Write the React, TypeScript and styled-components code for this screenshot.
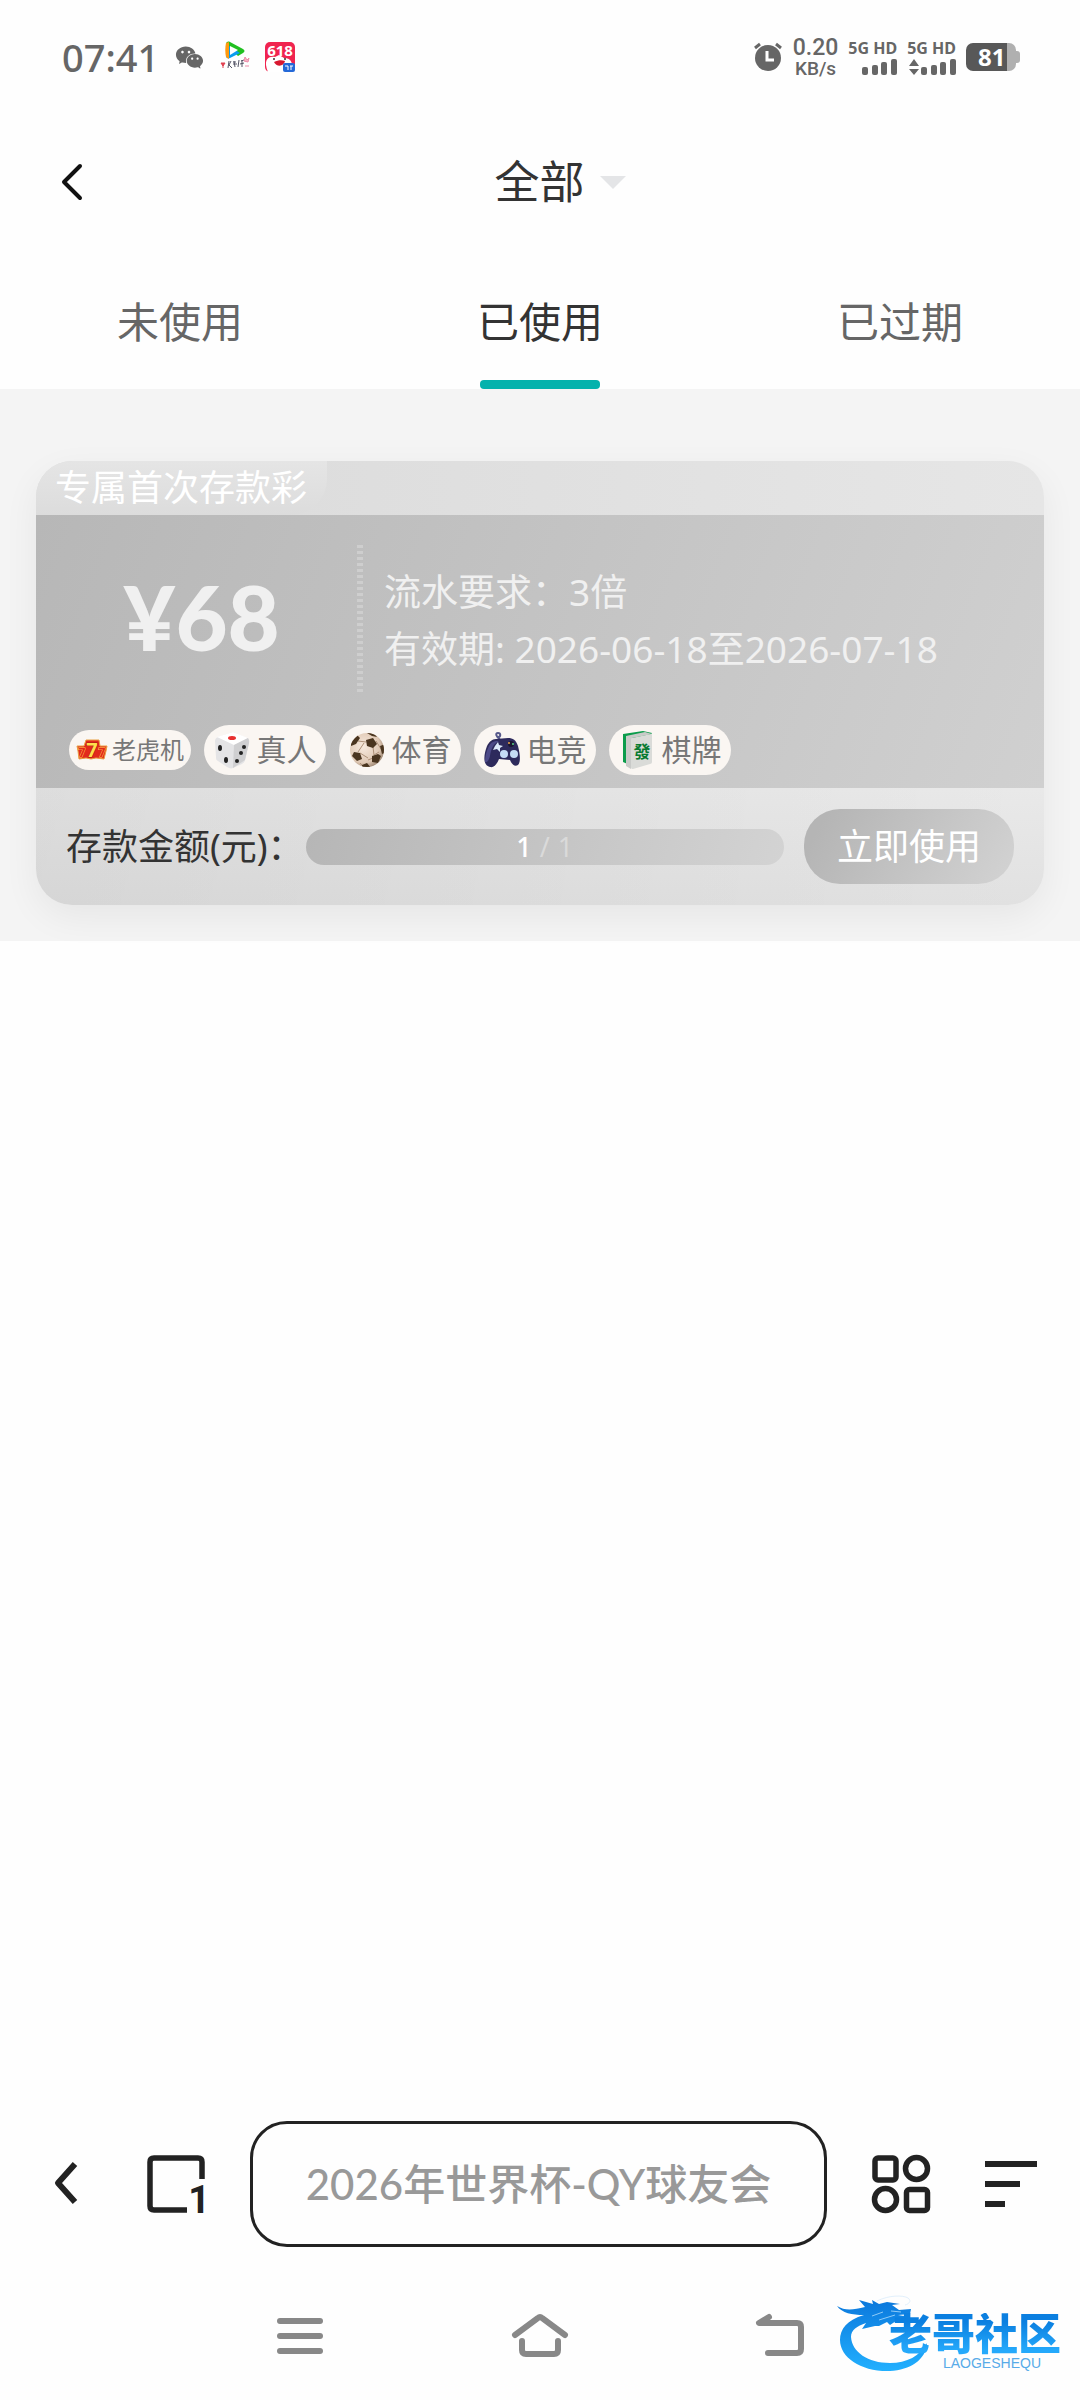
import React from 'react'
import { AiFillWechat } from 'react-icons/ai'
import styled, { createGlobalStyle } from 'styled-components'

const GlobalStyle = createGlobalStyle`
  * {
    box-sizing: border-box;
  }

  body {
    margin: 0;
    background: #fefefe;
    color: #333;
    font-family: 'Noto Sans', 'Noto Sans CJK SC', sans-serif;
  }

  button,
  input,
  select {
    margin: 0;
    padding: 0;
    border: 0;
    background: none;
    color: inherit;
    font: inherit;
  }

  svg {
    display: block;
    flex: none;
    overflow: visible;
  }
`

const Page = styled.div`
  position: relative;
  display: flex;
  flex-direction: column;
  min-height: 100vh;
`

/* status bar */

const StatusBar = styled.div`
  display: flex;
  align-items: center;
  justify-content: space-between;
  height: 114px;
  padding: 0 60px 0 62px;
  color: #666;
`

const StatusGroup = styled.div<{ $gap: number }>`
  display: flex;
  align-items: center;
  gap: ${({ $gap }) => $gap}px;
`

const Clock = styled.time`
  font-size: 38px;
  font-weight: 500;
  line-height: 48px;
`

const Speed = styled.div`
  display: flex;
  flex-direction: column;
  align-items: center;
  font-family: Roboto, sans-serif;
  font-size: 19px;
  font-weight: 500;
  line-height: 18px;

  strong {
    font-size: 23px;
    font-weight: 500;
    line-height: 24px;
  }
`

const Network = styled.div`
  display: flex;
  flex-direction: column;
  align-items: flex-end;
  gap: 3px;
  font-size: 16px;
  font-weight: 700;
  line-height: 16px;
`

const Battery = styled.div`
  display: flex;
  align-items: center;

  &::after {
    content: '';
    width: 4px;
    height: 12px;
    border-radius: 0 3px 3px 0;
    background: #b0b0b0;
  }
`

const BatteryBody = styled.div`
  width: 50px;
  height: 28px;
  padding-left: 12px;
  border-radius: 7px;
  background: linear-gradient(to right, #585858 81%, #b0b0b0 81%);
  color: #fff;
  font-size: 24px;
  font-weight: 700;
  line-height: 28px;
`

/* header */

const Header = styled.header`
  display: grid;
  grid-template-columns: 1fr auto 1fr;
  align-items: center;
  height: 136px;
  padding: 0 60px;
`

const IconButton = styled.button`
  display: flex;
  align-items: center;
  justify-content: center;
  min-width: 58px;
  height: 58px;
  cursor: pointer;
`

const HeaderBack = styled(IconButton)`
  justify-content: flex-start;
`

const FilterSelect = styled.select`
  appearance: none;
  height: 66px;
  color: #333;
  font-size: 45px;
  line-height: 66px;
`

const Caret = styled.svg`
  margin-left: 14px;
`

const TabList = styled.div`
  display: grid;
  grid-template-columns: repeat(3, 1fr);
  height: 139px;
`

const Tab = styled.button<{ $active: boolean }>`
  display: flex;
  flex-direction: column;
  align-items: center;
  justify-content: flex-end;
  gap: 28px;
  color: ${({ $active }) => ($active ? '#333' : '#666')};
  font-size: 42px;
  line-height: 60px;
  cursor: pointer;

  &::after {
    content: '';
    width: 120px;
    height: 9px;
    border-radius: 4px;
    background: ${({ $active }) => ($active ? '#04b2ac' : 'transparent')};
  }
`

/* coupon */

const CouponList = styled.main`
  padding: 72px 36px 36px;
  background: #f4f4f4;
`

const Card = styled.article`
  overflow: hidden;
  border-radius: 36px;
  box-shadow: 0 12px 36px rgba(0, 0, 0, 0.06);
  font-size: 36px;
  line-height: 54px;
`

const CardTop = styled.div`
  display: flex;
  height: 54px;
  background: linear-gradient(to right, #dadada, #e6e6e6);
`

const CardTitle = styled.h2`
  margin: 0;
  padding: 0 20px 0 19px;
  border-bottom-right-radius: 36px;
  background: linear-gradient(to bottom, #e5e5e5, #dcdcdc);
  color: #fff;
  font-size: 36px;
  font-weight: 400;
  line-height: 54px;
`

const CardBody = styled.div`
  padding: 30px 30px 13px;
  background: linear-gradient(110deg, #b7b7b7, #d0d0d0);
  color: #f0f0f0;
`

const CardInfo = styled.div`
  display: flex;
  height: 150px;
`

const Amount = styled.div`
  width: 291px;
  padding-right: 20px;
  font-family: Lato, 'Noto Sans', sans-serif;
  font-size: 90px;
  font-weight: 900;
  line-height: 142px;
  text-align: center;
`

const Divider = styled.div`
  width: 6px;
  background: repeating-linear-gradient(
    to bottom,
    #cecece 0 3px,
    transparent 3px 6px
  );
`

const Terms = styled.div`
  display: flex;
  flex-direction: column;
  justify-content: center;
  padding-left: 21px;
  font-size: 37px;
  line-height: 57px;

  p {
    margin: 0;
  }
`

const TagList = styled.ul`
  display: flex;
  align-items: center;
  gap: 13px;
  margin: 30px 0 0;
  padding: 0 3px;
  list-style: none;
`

const Tag = styled.li<{ $small?: boolean }>`
  display: flex;
  align-items: center;
  justify-content: center;
  gap: ${({ $small }) => ($small ? 4 : 7)}px;
  width: 122px;
  height: ${({ $small }) => ($small ? 40 : 50)}px;
  border-radius: 25px;
  background: #faf6f2;
  color: #777;
  font-size: ${({ $small }) => ($small ? 24 : 30)}px;
  line-height: 40px;
  white-space: nowrap;
`

const CardFooter = styled.div`
  display: flex;
  align-items: center;
  height: 117px;
  padding: 0 30px;
  background: linear-gradient(to right, rgba(0, 0, 0, 0.05), transparent),
    linear-gradient(to bottom, #e9e9e9, #e1e1e1);
`

const Progress = styled.div`
  display: flex;
  flex: 1;
  align-items: center;
  justify-content: center;
  gap: 8px;
  height: 36px;
  margin: 0 20px 0 2px;
  border-radius: 18px;
  background: linear-gradient(105deg, #b6b6b6, #d3d3d3);
  color: #dadada;
  font-size: 27px;
  line-height: 36px;

  b {
    color: #fff;
    font-weight: 500;
  }
`

const UseButton = styled.button`
  width: 210px;
  height: 75px;
  border-radius: 36px;
  background: linear-gradient(120deg, #b5b5b5 10%, #d3d3d3);
  color: #fff;
  font-size: 36px;
  line-height: 54px;
`

/* browser toolbar and system keys */

const Toolbar = styled.footer`
  display: flex;
  align-items: center;
  gap: 45px;
  margin-top: auto;
  padding: 12px 40px 24px 37px;
  color: #222;
`

const ToolGroup = styled.div`
  display: flex;
  gap: 52px;
`

const SearchBox = styled.input`
  flex: 1;
  min-width: 0;
  height: 126px;
  border: 3px solid #222;
  border-radius: 37px;
  font-family: Lato, 'Noto Sans CJK SC', sans-serif;
  font-size: 42px;
  font-weight: 500;
  text-align: center;

  &::placeholder {
    color: #999;
    opacity: 1;
  }
`

const SystemNav = styled.nav`
  display: grid;
  grid-template-columns: repeat(3, 240px);
  align-items: center;
  justify-content: center;
  height: 129px;
  color: #888;
`

const SystemKey = styled(IconButton)`
  justify-self: center;
`

const Watermark = styled.div`
  position: absolute;
  right: 19px;
  bottom: 27px;
  display: flex;
  flex-direction: column;
  align-items: flex-end;
  width: 224px;
  height: 80px;
  padding-top: 20px;
  font-family: 'Liberation Sans', 'Noto Sans CJK SC', sans-serif;
  font-weight: 900;

  svg {
    position: absolute;
    top: 0;
    left: 0;
  }
`

const WatermarkName = styled.span`
  position: relative;
  background: linear-gradient(to bottom, #0b7fe0 20%, #25a9fb 85%);
  background-clip: text;
  color: transparent;
  font-size: 43px;
  line-height: 44px;
`

const WatermarkLatin = styled.span`
  position: relative;
  padding-right: 20px;
  color: #58abe8;
  font-size: 14px;
  font-weight: 400;
  line-height: 12px;
`

const VideoAppIcon = () => (
  <svg width='30' height='32' viewBox='0 0 30 32'>
    <path d='M6 3c0-2 2-3 4-2l13 7c2 1 2 3 0 4l-5 3z' fill='#20c020' />
    <path d='M6 3v12c0 2 2 3 4 2l10-5z' fill='#0a9cf0' />
    <path d='M6 2c-1 5-1 9 0 14l3 2V1z' fill='#ff9a10' />
    <path d='M10 5v9l8-5z' fill='#fff' />
    <path d='M1 22l2 3 2-3zM3 24v3' stroke='#e04050' strokeWidth='1' fill='#e04050' />
    <path
      d='M9 20l-1 7m3-7-2 4 3 3m1-6h3m-2-1 1 6m-2-3h4m2-4-1 7m3-6 3-1m-2 0v7m-2-3 4-1'
      stroke='#556'
      strokeWidth='1'
      fill='none'
    />
    <path d='M25 16l2 3 2-2-1 4-4-1zM25 25h4' stroke='#ee8aa8' fill='#f6b5c6' />
  </svg>
)

const SaleAppIcon = () => (
  <svg width='30' height='30' viewBox='0 0 30 30'>
    <rect width='30' height='30' rx='5' fill='#f0244f' />
    <path d='M3 30c-5-12 0-16 7-15l4-2 5 3c8 0 9 6 8 14z' fill='#fff' />
    <text x='15' y='14' fill='#fff' fontSize='15' fontWeight='700' textAnchor='middle'>
      618
    </text>
    <circle cx='9' cy='17' r='1' fill='#333' />
    <circle cx='20' cy='17' r='1' fill='#333' />
    <path d='M9 20c4-2 8-2 11-1-1 6-9 6-11 1z' fill='#d81830' />
    <rect x='18' y='21' width='12' height='9' rx='2' fill='#2469d8' />
    <path d='M20 24h3v4m2-4h3m-2 0v4' stroke='#fff' strokeWidth='1' fill='none' />
  </svg>
)

const AlarmIcon = () => (
  <svg width='30' height='30' viewBox='0 0 30 30'>
    <circle cx='15' cy='16' r='13' fill='currentColor' />
    <path d='M2 6l5-4M28 6l-5-4' stroke='currentColor' strokeWidth='3' />
    <path d='M14 9v9h7' stroke='#fff' strokeWidth='3' fill='none' />
  </svg>
)

const SignalIcon = ({ data }: { data?: boolean }) => (
  <svg width='48' height='16' viewBox='0 0 48 16' fill='currentColor'>
    {data && <path d='M1 7l5-7 5 7zM1 10l5 6 5-6z' />}
    <rect x='13' y='8' width='6' height='8' rx='2' />
    <rect x='23' y='6' width='6' height='10' rx='2' />
    <rect x='32' y='3' width='6' height='13' rx='2' />
    <rect x='42' width='6' height='16' rx='2' />
  </svg>
)

const SlotIcon = () => (
  <svg width='32' height='22' viewBox='0 0 32 22'>
    <path
      d='M1 7h7l2-6h13l1 6h7l-1 5-2 8-8-1-5 1-5-1-7 1-1-8z'
      fill='#e22a1c'
      stroke='#e9a043'
      strokeWidth='1'
    />
    <g
      fill='#e4271b'
      stroke='#ffc94a'
      strokeWidth='1'
      paintOrder='stroke'
      fontWeight='700'
      textAnchor='middle'
    >
      <text x='6' y='18' fontSize='12'>7</text>
      <text x='26' y='18' fontSize='12'>7</text>
      <text x='16' y='18' fill='#ffdf4c' stroke='#a8180f' fontSize='20'>7</text>
    </g>
  </svg>
)

const DiceIcon = () => (
  <svg width='36' height='36' viewBox='0 0 36 36'>
    <path d='M4 5l15-5 14 6c2 1 3 3 2 5l-4 17c0 2-2 3-3 4l-9 4c-2 1-4 0-6-1L4 29c-2-1-2-2-2-4L1 9c0-2 1-3 3-4z' fill='#e4e4e6' />
    <path d='M3 5l16-5 15 6-14 7z' fill='#fff' />
    <path d='M20 13l14-7c1 1 1 3 1 5l-4 17-12 8z' fill='#cfcfd1' />
    <ellipse cx='18' cy='6' rx='4' ry='2' fill='#e83030' />
    <g fill='#222'>
      <ellipse cx='6' cy='16' rx='2' ry='3' />
      <ellipse cx='12' cy='28' rx='2' ry='3' />
      <circle cx='30' cy='15' r='2' />
      <circle cx='27' cy='21' r='2' />
      <circle cx='23' cy='29' r='2' />
    </g>
  </svg>
)

const BallIcon = () => (
  <svg width='36' height='36' viewBox='0 0 36 36'>
    <defs>
      <clipPath id='ball'>
        <circle cx='18' cy='18' r='17' />
      </clipPath>
      <radialGradient id='leather' cx='40%' cy='40%' r='65%'>
        <stop offset='0' stopColor='#f8eade' />
        <stop offset='0.7' stopColor='#dfc8b4' />
        <stop offset='1' stopColor='#8e7763' />
      </radialGradient>
    </defs>
    <g clipPath='url(#ball)'>
      <rect width='36' height='36' fill='url(#leather)' />
      <path
        d='M9 9l8 1m7 5 1 8m-14-2 8 5m-4-15-6 9m15 6-5 2m-4 7-4-4M27 9l5 8m-7 6 5-3'
        stroke='#ad9078'
        strokeWidth='1'
      />
      <g fill='#4a351f'>
        <path d='M17 8l7-2 4 6-4 4-6-2z' />
        <path d='M2 9l6-6 3 3-4 6-5 2z' />
        <path d='M5 20l6 1 2 6-5 2-5-5z' />
        <path d='M23 24l6-2 3 2-3 7-6-1z' />
        <path d='M31 14l5-2v9l-3 1z' />
        <path d='M13 33l5-2 4 5h-9zM18 1h7l3 4-5-1z' />
      </g>
    </g>
  </svg>
)

const GamepadIcon = () => (
  <svg width='36' height='36' viewBox='0 0 36 36'>
    <path d='M16 7c-4-2-5-6-2-6s3 4 0 4' stroke='#56598b' strokeWidth='2' fill='none' />
    <path
      d='M3 14c2-4 5-7 9-7l12-1c5 0 8 2 10 8 2 8 3 16 0 19-3 2-6 0-8-5l-11-1c-2 5-5 9-9 8-8-2-6-13-3-21z'
      fill='#2d2a5c'
    />
    <path d='M5 14c3-5 6-5 10-5-6 3-8 8-9 15-1 4-3 7-5 6 0-5 1-10 4-16z' fill='#4c4a88' />
    <path d='M14 10l1 3 4 1-3 2v4l-3-3-4 1 2-4z' fill='#dce9fb' />
    <circle cx='20' cy='22' r='4' fill='#c5dcf6' />
    <circle cx='30' cy='22' r='4' fill='#c5dcf6' />
    <circle cx='27' cy='12' r='3' fill='#191631' />
    <circle cx='25' cy='11' r='1' fill='#f1a44a' />
    <circle cx='29' cy='12' r='1' fill='#5bd08a' />
  </svg>
)

const MahjongIcon = () => (
  <svg width='36' height='38' viewBox='0 0 36 38'>
    <path d='M4 3 24 0l9 2-2 3-18 3v27l-9-4z' fill='#0b9c4b' />
    <path d='M7 5 26 1l7 2-20 4-1 31-5-3z' fill='#c9cac8' />
    <path d='M13 7l19-4c1 0 1 1 1 2v26c0 1-1 2-2 2l-17 5c-1 0-2 0-2-2V9c0-1 0-2 1-2z' fill='#dadbd8' />
    <text x='23' y='27' fill='#087a30' fontSize='17' fontWeight='700' textAnchor='middle'>
      發
    </text>
  </svg>
)

const DragonIcon = () => (
  <svg width='224' height='80' viewBox='0 0 224 80'>
    <defs>
      <linearGradient id='dragon' x1='0' y1='0' x2='0' y2='1'>
        <stop offset='0' stopColor='#0b78dc' />
        <stop offset='1' stopColor='#22b0ff' />
      </linearGradient>
    </defs>
    <path
      d='M27 22C10 27 3 36 3 47c0 18 22 32 50 31 20-1 36-11 37-28-7 13-20 20-37 20-22 0-38-11-39-26 0-7 6-11 15-14l-4 6 13-3 4 0 8-4 3 3 6-4 9 0 4-4-11-2 12-1 1-5-12 1-7-5 8-1-13-2-8 2-7-4 1 4-14-4 6 7C16 17 8 18 0 13c5 7 15 9 27 9z'
      fill='url(#dragon)'
    />
    <path d='M40 8c12-6 26-6 31-3 4 3 1 6-3 7' stroke='#e2f0fc' fill='none' />
    <path d='M35 23l11-4M42 27l16-5M54 18l10 1' stroke='#8fcbf7' strokeWidth='1' />
  </svg>
)

const tabs = ['未使用', '已使用', '已过期']

const tags = [
  { label: '老虎机', icon: SlotIcon, small: true },
  { label: '真人', icon: DiceIcon },
  { label: '体育', icon: BallIcon },
  { label: '电竞', icon: GamepadIcon },
  { label: '棋牌', icon: MahjongIcon },
]

export default function App() {
  const [active, setActive] = React.useState('已使用')

  return (
    <Page>
      <GlobalStyle />
      <StatusBar>
        <StatusGroup $gap={15}>
          <Clock>07:41</Clock>
          <AiFillWechat size={31} />
          <VideoAppIcon />
          <SaleAppIcon />
        </StatusGroup>
        <StatusGroup $gap={10}>
          <AlarmIcon />
          <Speed>
            <strong>0.20</strong>
            <span>KB/s</span>
          </Speed>
          <Network>
            5G HD
            <SignalIcon />
          </Network>
          <Network>
            5G HD
            <SignalIcon data />
          </Network>
          <Battery>
            <BatteryBody>81</BatteryBody>
          </Battery>
        </StatusGroup>
      </StatusBar>

      <Header>
        <HeaderBack aria-label='返回'>
          <svg width='24' height='36' viewBox='0 0 24 36'>
            <path
              d='M20 2 4 18l16 16'
              fill='none'
              stroke='#111'
              strokeWidth='4'
              strokeLinecap='round'
              strokeLinejoin='round'
            />
          </svg>
        </HeaderBack>
        <FilterSelect aria-label='类型'>
          <option>全部</option>
        </FilterSelect>
        <Caret width='26' height='13' viewBox='0 0 26 13'>
          <path d='M0 0h26L13 13z' fill='#e4e5e7' />
        </Caret>
      </Header>

      <TabList role='tablist'>
        {tabs.map((tab) => (
          <Tab
            key={tab}
            role='tab'
            aria-selected={tab === active}
            $active={tab === active}
            onClick={() => setActive(tab)}
          >
            {tab}
          </Tab>
        ))}
      </TabList>

      <CouponList>
        <Card>
          <CardTop>
            <CardTitle>专属首次存款彩</CardTitle>
          </CardTop>
          <CardBody>
            <CardInfo>
              <Amount>¥68</Amount>
              <Divider />
              <Terms>
                <p>流水要求：3倍</p>
                <p>有效期: 2026-06-18至2026-07-18</p>
              </Terms>
            </CardInfo>
            <TagList>
              {tags.map(({ label, icon, small }) => (
                <Tag key={label} $small={small}>
                  {React.createElement(icon)}
                  {label}
                </Tag>
              ))}
            </TagList>
          </CardBody>
          <CardFooter>
            <span id='deposit'>存款金额(元)：</span>
            <Progress
              role='progressbar'
              aria-labelledby='deposit'
              aria-valuenow={1}
              aria-valuemax={1}
            >
              <b>1</b>
              <span>/</span>
              <span>1</span>
            </Progress>
            <UseButton>立即使用</UseButton>
          </CardFooter>
        </Card>
      </CouponList>

      <Toolbar>
        <ToolGroup>
          <IconButton aria-label='后退'>
            <svg width='24' height='42' viewBox='0 0 24 42'>
              <path d='M21 1 4 20l17 19' fill='none' stroke='currentColor' strokeWidth='6' strokeLinejoin='round' />
            </svg>
          </IconButton>
          <IconButton aria-label='窗口'>
            <svg width='58' height='58' viewBox='0 0 58 58'>
              <path
                d='M55 24V7q0-4-4-4H7Q3 3 3 7v44q0 4 4 4h33'
                fill='none'
                stroke='currentColor'
                strokeWidth='5.5'
              />
              <text
                x='63'
                y='58'
                fill='currentColor'
                fontFamily='Roboto, sans-serif'
                fontSize='38'
                fontWeight='700'
                textAnchor='end'
              >
                1
              </text>
            </svg>
          </IconButton>
        </ToolGroup>
        <SearchBox aria-label='搜索' placeholder='2026年世界杯-QY球友会' />
        <ToolGroup>
          <IconButton aria-label='应用'>
            <svg width='58' height='58' viewBox='0 0 58 58' fill='none' stroke='currentColor' strokeWidth='5.5'>
              <rect x='3' y='3' width='21' height='22' rx='3' />
              <circle cx='44.5' cy='13.5' r='11' />
              <circle cx='13.5' cy='44.5' r='11' />
              <rect x='34.5' y='34.5' width='21' height='21' rx='3' />
            </svg>
          </IconButton>
          <IconButton aria-label='菜单'>
            <svg width='52' height='47' viewBox='0 0 52 47' fill='currentColor'>
              <path d='M0 0h52v6H0zM0 20h35v6H0zM0 40h20v6H0z' />
            </svg>
          </IconButton>
        </ToolGroup>
      </Toolbar>

      <SystemNav>
        <SystemKey aria-label='最近任务'>
          <svg width='46' height='36' viewBox='0 0 46 36' fill='currentColor'>
            <rect width='46' height='6' rx='3' />
            <rect y='15' width='46' height='6' rx='3' />
            <rect y='30' width='46' height='6' rx='3' />
          </svg>
        </SystemKey>
        <SystemKey aria-label='主页'>
          <svg width='58' height='44' viewBox='0 0 58 44' fill='none' stroke='currentColor' strokeWidth='6' strokeLinecap='round'>
            <path d='M4 21 27 4q2-2 4 0l23 17' />
            <path d='M11 27v9q0 4 4 4h28q4 0 4-4v-9' />
          </svg>
        </SystemKey>
        <SystemKey aria-label='返回上一级'>
          <svg width='50' height='43' viewBox='0 0 50 43' fill='none' stroke='currentColor' strokeWidth='6' strokeLinecap='round' strokeLinejoin='round'>
            <path d='M14 3 4 9h38q4 0 4 4v22q0 4-4 4H13' />
          </svg>
        </SystemKey>
      </SystemNav>

      <Watermark>
        <DragonIcon />
        <WatermarkName>老哥社区</WatermarkName>
        <WatermarkLatin>LAOGESHEQU</WatermarkLatin>
      </Watermark>
    </Page>
  )
}
